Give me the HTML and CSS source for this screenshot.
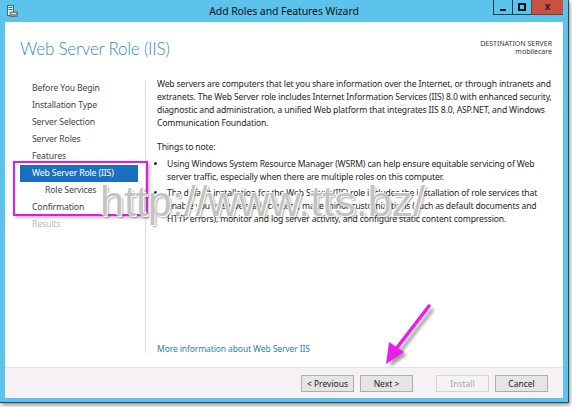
FILE: index.html
```html
<!DOCTYPE html>
<html>
<head>
<meta charset="utf-8">
<link rel="stylesheet" href="styles.css">
</head>
<body>
<div class="window">
  <div class="titlebar">
    <svg class="appicon" width="11" height="12" viewBox="0 0 11 12">
      <rect x="0.5" y="0.5" width="6" height="10" fill="#eaf4fb" stroke="#2a6fa8"/>
      <rect x="1.5" y="2" width="4" height="1" fill="#2a6fa8"/>
      <rect x="1.5" y="4" width="4" height="1" fill="#2a6fa8"/>
      <rect x="3" y="7" width="7.5" height="4.5" fill="#8a8f96" stroke="#555" stroke-width="0.6"/>
      <rect x="4" y="8" width="5" height="1" fill="#dfe3e6"/>
    </svg>
    <div class="title">Add Roles and Features Wizard</div>
    <div class="controls">
      <div class="ctl ctl-min"><span class="min-glyph"></span></div>
      <div class="ctl ctl-max"><span class="max-glyph"></span></div>
      <div class="ctl ctl-close">x</div>
    </div>
  </div>
  <div class="client">
    <div class="header">
      <h1 class="heading">Web Server Role (IIS)</h1>
      <div class="dest">
        <div class="dest-label">DESTINATION SERVER</div>
        <div class="dest-name">mobilecare</div>
      </div>
    </div>
    <div class="main">
      <ul class="nav">
        <li class="nav-item">Before You Begin</li>
        <li class="nav-item">Installation Type</li>
        <li class="nav-item">Server Selection</li>
        <li class="nav-item">Server Roles</li>
        <li class="nav-item">Features</li>
        <li class="nav-item nav-active">Web Server Role (IIS)</li>
        <li class="nav-item nav-sub">Role Services</li>
        <li class="nav-item">Confirmation</li>
        <li class="nav-item nav-disabled">Results</li>
      </ul>
      <div class="content">
        <p class="para">Web servers are computers that let you share information over the Internet, or through intranets and extranets. The Web Server role includes Internet Information Services (IIS) 8.0 with enhanced security, diagnostic and administration, a unified Web platform that integrates IIS 8.0, ASP.NET, and Windows Communication Foundation.</p>
        <p class="para note-title">Things to note:</p>
        <ul class="bullets">
          <li>Using Windows System Resource Manager (WSRM) can help ensure equitable servicing of Web server traffic, especially when there are multiple roles on this computer.</li>
          <li>The default installation for the Web Server (IIS) role includes the installation of role services that enable you to serve static content, make minor customizations (such as default documents and HTTP errors), monitor and log server activity, and configure static content compression.</li>
        </ul>
        <div class="spacer"></div>
        <a class="more-link">More information about Web Server IIS</a>
      </div>
    </div>
    <div class="footer">
      <button class="btn">&lt; Previous</button>
      <button class="btn">Next &gt;</button>
      <button class="btn btn-disabled btn-install">Install</button>
      <button class="btn">Cancel</button>
    </div>
  </div>
</div>
<div class="highlight-box"></div>
<div class="watermark">http://www.tts.bz/</div>
<svg class="arrow" width="572" height="407" viewBox="0 0 572 407">
  <defs>
    <filter id="blur" x="-20%" y="-20%" width="140%" height="140%">
      <feGaussianBlur stdDeviation="1.5"/>
    </filter>
  </defs>
  <g filter="url(#blur)" opacity="0.55" transform="translate(4,3)">
    <line x1="429" y1="306" x2="396" y2="349" stroke="#555" stroke-width="3.5"/>
    <polygon points="386,364 390,343 403,352" fill="#555"/>
  </g>
  <line x1="429" y1="306" x2="396" y2="349" stroke="#e81ee8" stroke-width="3.5" stroke-linecap="round"/>
  <polygon points="386,364 389,342 404,352" fill="#e81ee8"/>
</svg>
</body>
</html>
```
FILE: styles.css
```css
html, body {
  margin: 0;
  padding: 0;
}
body {
  width: 572px;
  height: 407px;
  overflow: hidden;
  background: #ffffff;
  font-family: "Noto Sans", "Open Sans", sans-serif;
  position: relative;
}
.window {
  width: 568px;
  height: 402px;
  background: #5cc4ec;
  border-right: 1px solid #2c4756;
  border-bottom: 1px solid #2c4756;
  box-shadow: 1px 2px 4px rgba(0,0,0,0.45);
  display: flex;
  flex-direction: column;
}
.titlebar {
  height: 22px;
  display: flex;
  align-items: flex-start;
  position: relative;
}
.appicon {
  margin: 5px 0 0 7px;
}
.title {
  position: absolute;
  left: 0;
  right: 0;
  top: 4px;
  text-align: center;
  font-size: 10.5px;
  letter-spacing: -0.1px;
  color: #111;
  line-height: 14px;
}
.controls {
  margin-left: auto;
  margin-right: 5px;
  display: flex;
  height: 15px;
  position: relative;
}
.ctl {
  height: 14px;
  border-left: 1px solid #1d3d52;
  border-bottom: 1px solid #1d3d52;
  display: flex;
  align-items: center;
  justify-content: center;
}
.ctl-min, .ctl-max {
  width: 18px;
}
.ctl-close {
  width: 31px;
  background: #c6523f;
  border-left: 1px solid #7a3a30;
  border-bottom: 1px solid #7a3a30;
  color: #1a1a1a;
  font-size: 10px;
  font-weight: bold;
  font-family: "Liberation Sans", sans-serif;
  line-height: 14px;
}
.min-glyph {
  width: 6px;
  height: 2px;
  background: #111;
  margin-top: 5px;
}
.max-glyph {
  width: 4px;
  height: 4px;
  border: 2px solid #111;
}
.client {
  flex: 1;
  margin: 0 5px 4px 5px;
  background: #ffffff;
  display: flex;
  flex-direction: column;
}
.header {
  height: 58px;
  display: flex;
  justify-content: space-between;
  align-items: flex-start;
}
.heading {
  margin: 16px 0 0 15px;
  font-family: "Lato", "Noto Sans", sans-serif;
  font-size: 17px;
  letter-spacing: -0.2px;
  font-weight: 300;
  color: #2f8eb5;
  line-height: 22px;
}
.dest {
  margin: 18px 11px 0 0;
  text-align: right;
  font-size: 7px;
  line-height: 8px;
  color: #333;
}
.main {
  flex: 1;
  display: flex;
}
.nav {
  list-style: none;
  margin: 0;
  padding: 0;
  width: 140px;
  flex-shrink: 0;
}
.nav-item {
  margin: 0 7px 0 15px;
  padding-left: 12px;
  height: 17px;
  line-height: 17px;
  font-size: 8.7px;
  letter-spacing: -0.15px;
  color: #444;
}
.nav-active {
  background: #1b6fbf;
  color: #ffffff;
}
.nav-sub {
  padding-left: 25px;
}
.nav-disabled {
  color: #b9b9b9;
}
.content {
  margin-bottom: 14px;
  border-left: 1px solid #dcdcdc;
  padding: 0 4px 0 11px;
  flex: 1;
  display: flex;
  flex-direction: column;
  font-size: 8.6px;
  letter-spacing: -0.15px;
  line-height: 13px;
  color: #1e1e1e;
}
.para {
  margin: -2px 0 0 0;
}
.note-title {
  margin-top: 11px;
}
.bullets {
  margin: 4px 0 0 0;
  padding-left: 10px;
}
.bullets li {
  margin-bottom: 3px;
}
.spacer {
  flex: 1;
}
.more-link {
  color: #2f84b0;
  margin-bottom: -3px;
}
.footer {
  height: 31px;
  background: #f5f1f5;
  border-top: 1px solid #e6dfe6;
  display: flex;
  align-items: flex-start;
  padding: 7px 0 0 296px;
  box-sizing: border-box;
}
.btn {
  width: 53px;
  height: 17px;
  margin: 0 6px 0 0;
  padding: 0;
  border: 1px solid #adadad;
  background: #e5e5e5;
  font-family: "Noto Sans", "Open Sans", sans-serif;
  font-size: 8.5px;
  color: #1a1a1a;
}
.btn-install {
  margin-left: 17px;
}
.btn-disabled {
  background: #f4f4f4;
  border-color: #d4d4d4;
  color: #a8a8a8;
}
.highlight-box {
  position: absolute;
  left: 13px;
  top: 161px;
  width: 131px;
  height: 51px;
  border: 2px solid #e31ae3;
  box-shadow: 2px 2px 3px rgba(0,0,0,0.25);
  pointer-events: none;
}
.watermark {
  position: absolute;
  left: 100px;
  top: 177px;
  font-family: "Liberation Sans", sans-serif;
  font-size: 43px;
  line-height: 48px;
  color: rgba(185,185,185,0.85);
  text-shadow: -1px -1px 0 #fff, 1px 1px 0 #fff, 2px 2px 2px rgba(0,0,0,0.35);
  pointer-events: none;
  white-space: nowrap;
}
.arrow {
  position: absolute;
  left: 0;
  top: 0;
  pointer-events: none;
}
```
